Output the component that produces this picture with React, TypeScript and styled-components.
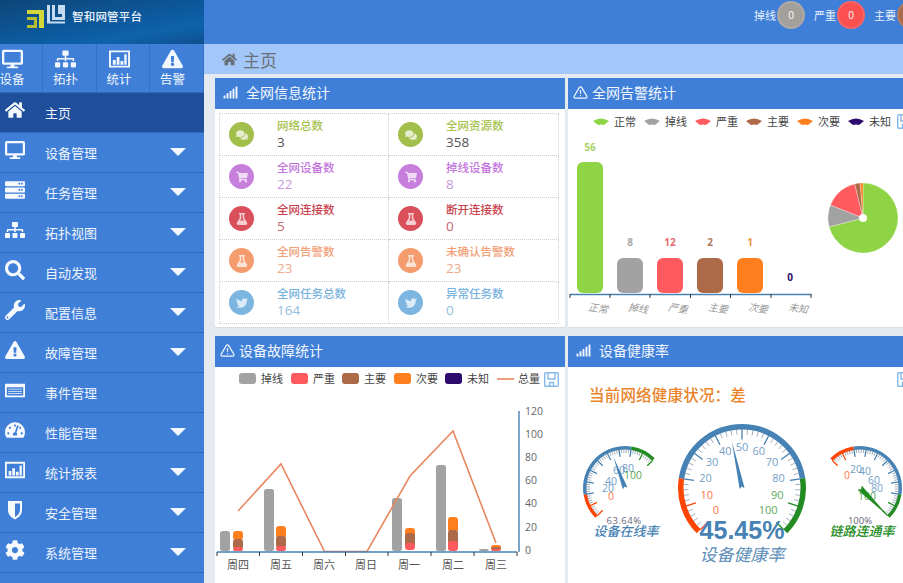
import type { ReactNode } from "react";
import styled, { createGlobalStyle } from "styled-components";
import {
  FaCog,
  FaComments,
  FaDesktop,
  FaExclamationTriangle,
  FaFlask,
  FaHome,
  FaSearch,
  FaServer,
  FaShoppingCart,
  FaSignal,
  FaSitemap,
  FaTachometerAlt,
  FaTwitter,
  FaWrench,
} from "react-icons/fa";
import { FiAlertTriangle } from "react-icons/fi";

const FONT = `"Open Sans", "Noto Sans CJK SC", sans-serif`;
const BLUE = "#3f7fd8";
const RED = "#ff4500";
const STEEL = "#4682b4";
const GREEN = "#228b22";

const GlobalStyle = createGlobalStyle`
  html, body {
    margin: 0;
    padding: 0;
    overflow: hidden;
    background: #e5e9f0;
    font-family: ${FONT};
  }
  * { box-sizing: border-box; }
`;

const Page = styled.div`
  width: 903px;
  height: 583px;
  overflow: hidden;
  display: flex;
  flex-direction: column;
`;

const TopBar = styled.div`
  height: 44px;
  flex: none;
  display: flex;
  background: ${BLUE};
`;

const Brand = styled.div`
  width: 204px;
  flex: none;
  display: flex;
  align-items: flex-start;
  gap: 7px;
  padding: 5px 0 0 27px;
  background: linear-gradient(170deg, #0e4678 0%, #0c5a9f 55%, #0f62aa 75%, #0e4f8e 100%);
`;

const BrandName = styled.span`
  margin-top: 3px;
  color: #eaf3fb;
  font-size: 11.5px;
  font-weight: 500;
  letter-spacing: 0.2px;
`;

const AlarmStrip = styled.div`
  display: flex;
  align-items: flex-start;
  gap: 9px;
  padding: 1px 0 0 550px;
  white-space: nowrap;
`;

const AlarmItem = styled.div`
  display: flex;
  align-items: center;
  gap: 1px;
  color: #e8f1fc;
  font-size: 11px;
`;

const AlarmBadge = styled.span<{ $color: string }>`
  width: 28px;
  height: 28px;
  flex: none;
  display: flex;
  align-items: center;
  justify-content: center;
  border-radius: 50%;
  color: #fff;
  font-size: 10px;
  background: ${(p) => p.$color};
  border: 2px solid rgba(255, 255, 255, 0.12);
`;

const Main = styled.div`
  flex: 1;
  min-height: 0;
  display: flex;
`;

const Sidebar = styled.nav`
  width: 204px;
  flex: none;
  overflow: hidden;
  background: ${BLUE};
`;

const ShortcutRow = styled.div`
  height: 49px;
  margin-left: -10px;
  display: grid;
  grid-template-columns: 53px 54px 53px 54px;
  border-bottom: 1px solid #2f68ba;
`;

const Shortcut = styled.div`
  display: flex;
  flex-direction: column;
  align-items: center;
  padding: 5px 8px 0 0;
  color: #f2f7fd;
  font-size: 12.5px;
  line-height: 15px;
  border-right: 1px solid #3570c4;

  svg {
    height: 20px;
    margin-bottom: 3px;
    font-size: 21px;
  }
`;

const MenuRow = styled.div<{ $active?: boolean }>`
  height: 40px;
  display: flex;
  align-items: center;
  color: #eef4fc;
  font-size: 13px;
  background: ${(p) => (p.$active ? "#1f4f9b" : "transparent")};
  border-bottom: 1px solid #2f68ba;
`;

const MenuIcon = styled.span`
  width: 45px;
  flex: none;
  display: flex;
  justify-content: center;
  padding: 0 15px 5px 0;
  color: #f6f9fe;
  font-size: 20px;
`;

const MenuLabel = styled.span`
  flex: 1;
`;

const MenuArrow = styled.span`
  width: 0;
  height: 0;
  margin: 0 18px 2px 0;
  border-left: 8px solid transparent;
  border-right: 8px solid transparent;
  border-top: 8px solid #f4f8fe;
`;

const Content = styled.div`
  flex: 1;
  min-width: 0;
  display: flex;
  flex-direction: column;
`;

const Breadcrumb = styled.div`
  height: 30px;
  flex: none;
  display: flex;
  align-items: center;
  gap: 6px;
  padding-left: 18px;
  color: #6a7078;
  font-size: 17px;
  background: #a3c7f8;

  svg {
    font-size: 15px;
  }
`;

const PanelGrid = styled.div`
  display: grid;
  grid-template-columns: 350px 346px;
  grid-template-rows: 249px 249px;
  gap: 9px 3px;
  padding: 4px 0 0 11px;
`;

const Panel = styled.section`
  overflow: hidden;
  background: #fff;
  box-shadow: 0 1px 0 #d9dde3;
`;

const PanelHead = styled.header<{ $wide?: boolean }>`
  height: 31px;
  display: flex;
  align-items: center;
  gap: ${(p) => (p.$wide ? "8px" : "4px")};
  padding: 0 0 3px ${(p) => (p.$wide ? "8px" : "5px")};
  color: #f2f7fd;
  font-size: 14px;
  background: ${BLUE};

  svg {
    font-size: 15px;
    flex: none;
  }
`;

const StatGrid = styled.div`
  margin: 4px 6px 0 4px;
  display: grid;
  grid-template-columns: 169px 170px;
  grid-auto-rows: 42px;
  border-top: 1px dotted #cfcfcf;
  border-left: 1px dotted #cfcfcf;
`;

const StatCell = styled.div`
  display: flex;
  align-items: center;
  gap: 23px;
  padding-left: 9px;
  border-right: 1px dotted #cfcfcf;
  border-bottom: 1px dotted #cfcfcf;
`;

const StatBadge = styled.span<{ $color: string }>`
  width: 25px;
  height: 25px;
  flex: none;
  display: flex;
  align-items: center;
  justify-content: center;
  border-radius: 50%;
  color: rgba(255, 255, 255, 0.72);
  font-size: 12px;
  background: ${(p) => p.$color};
`;

const StatText = styled.div`
  display: flex;
  flex-direction: column;
  margin-top: -1px;
`;

const StatTitle = styled.span<{ $color: string }>`
  color: ${(p) => p.$color};
  font-size: 11.5px;
  font-weight: 500;
  line-height: 17px;
`;

const StatValue = styled.span<{ $color: string }>`
  color: ${(p) => p.$color};
  font-size: 13.5px;
  line-height: 17px;
`;

const Chart = styled.svg`
  display: block;
  font-family: ${FONT};
`;

const HealthBody = styled.div`
  position: relative;
`;

const HealthSave = styled.svg`
  position: absolute;
  top: 5px;
  left: 329px;
`;

const HealthTitle = styled.div`
  padding: 16px 0 0 21px;
  height: 49px;
  color: #e8842a;
  font-size: 15.5px;
  font-weight: 500;
  letter-spacing: 0.2px;
`;

// bar-chart icon in a frame, the icon package only has the open version
const FramedChart = () => (
  <svg width="1em" height="1em" viewBox="0 0 22 20" fill="currentColor">
    <path fillRule="evenodd" d="M0 1h22v18H0zM2 3v14h18V3z" />
    <path d="M4 11h3v5H4zM8 8h3v8H8zM12 12h3v4h-3zM16 5h2.500v11H16z" />
  </svg>
);

const EventList = () => (
  <svg width="1em" height="1em" viewBox="0 0 22 20" fill="currentColor">
    <path fillRule="evenodd" d="M0 3h22v15H0zM2 7v9h18V7z" />
    <path d="M3.500 8.500h15v1h-15zM3.500 11h15v1h-15zM3.500 13.500h15v1h-15z" />
  </svg>
);

const Shield = () => (
  <svg width="1em" height="1em" viewBox="0 0 20 20" fill="currentColor">
    <path fillRule="evenodd" d="M3 1h14v9c0 5-4 8-7 9.500C7 18 3 15 3 10zM10 3.500V17c2.500-1.400 5-3.800 5-7V3.500z" />
  </svg>
);

type Stat = { title: string; value: string; titleColor: string; valueColor: string; badge: string; icon: ReactNode };

const stats: Stat[] = [
  { title: "网络总数", value: "3", titleColor: "#a8c34f", valueColor: "#555", badge: "#a3bf4b", icon: <FaComments /> },
  { title: "全网资源数", value: "358", titleColor: "#a8c34f", valueColor: "#555", badge: "#a3bf4b", icon: <FaComments /> },
  { title: "全网设备数", value: "22", titleColor: "#c276dc", valueColor: "#c79ade", badge: "#c77fdc", icon: <FaShoppingCart /> },
  { title: "掉线设备数", value: "8", titleColor: "#c276dc", valueColor: "#c79ade", badge: "#c77fdc", icon: <FaShoppingCart /> },
  { title: "全网连接数", value: "5", titleColor: "#c9444e", valueColor: "#c1666e", badge: "#d9505a", icon: <FaFlask /> },
  { title: "断开连接数", value: "0", titleColor: "#c9444e", valueColor: "#c1666e", badge: "#d9505a", icon: <FaFlask /> },
  { title: "全网告警数", value: "23", titleColor: "#f2a078", valueColor: "#eda98a", badge: "#f59c6e", icon: <FaFlask /> },
  { title: "未确认告警数", value: "23", titleColor: "#f2a078", valueColor: "#eda98a", badge: "#f59c6e", icon: <FaFlask /> },
  { title: "全网任务总数", value: "164", titleColor: "#78b2de", valueColor: "#94bddd", badge: "#7cb5e0", icon: <FaTwitter /> },
  { title: "异常任务数", value: "0", titleColor: "#78b2de", valueColor: "#94bddd", badge: "#7cb5e0", icon: <FaTwitter /> },
];

const menu: { label: string; icon: ReactNode; arrow?: boolean; active?: boolean }[] = [
  { label: "主页", icon: <FaHome />, active: true },
  { label: "设备管理", icon: <FaDesktop />, arrow: true },
  { label: "任务管理", icon: <FaServer />, arrow: true },
  { label: "拓扑视图", icon: <FaSitemap />, arrow: true },
  { label: "自动发现", icon: <FaSearch />, arrow: true },
  { label: "配置信息", icon: <FaWrench />, arrow: true },
  { label: "故障管理", icon: <FaExclamationTriangle />, arrow: true },
  { label: "事件管理", icon: <EventList /> },
  { label: "性能管理", icon: <FaTachometerAlt />, arrow: true },
  { label: "统计报表", icon: <FramedChart />, arrow: true },
  { label: "安全管理", icon: <Shield />, arrow: true },
  { label: "系统管理", icon: <FaCog />, arrow: true },
];

const Logo = () => (
  <svg width="38" height="24" viewBox="0 0 38 24">
    <path d="M0 5h17v18h-5V9H0z" fill="#d3d83a" />
    <path d="M0 12h10v11H0v-3h7v-5H0z" fill="#b6bf2f" />
    <path d="M20 0h3v18h-3z" fill="#c5dcf2" />
    <path d="M25 0h3v12h7V9h-4V0h7v15H25z" fill="#c5dcf2" />
    <path d="M20 18.500h18v-2H20z" fill="#c5dcf2" />
  </svg>
);

const SaveIcon = ({ x, y }: { x: number; y: number }) => (
  <g transform={`translate(${x} ${y})`} fill="none" stroke="#86b8ea" strokeWidth="1.4">
    <rect x="0.7" y="0.7" width="13.6" height="13.6" rx="1" />
    <path d="M4 1v6h7V1M5.500 14v-3.500h4V14" />
  </g>
);

// fan shaped legend mark of the alarm chart
const FanMark = ({ x, y, color }: { x: number; y: number; color: string }) => (
  <path transform={`translate(${x} ${y})`} d="M0 3Q8-2 16 3L11 7Q8 6 5 7Z" fill={color} />
);

const alarmBars = [
  { name: "正常", value: 56, color: "#8fd444", labelColor: "#a8d46a", x: 577, top: 162, labelY: 151 },
  { name: "掉线", value: 8, color: "#a2a2a2", labelColor: "#a8a8a8", x: 617, top: 258, labelY: 246 },
  { name: "严重", value: 12, color: "#ff5b5f", labelColor: "#e86a70", x: 657, top: 258, labelY: 246 },
  { name: "主要", value: 2, color: "#ac6a48", labelColor: "#ac7a60", x: 697, top: 258, labelY: 246 },
  { name: "次要", value: 1, color: "#ff7f1e", labelColor: "#f09040", x: 737, top: 258, labelY: 246 },
  { name: "未知", value: 0, color: "#2d0a6e", labelColor: "#2d0a6e", x: 777, top: 293, labelY: 281 },
];

const polar = (cx: number, cy: number, r: number, deg: number) => {
  const a = (deg * Math.PI) / 180;
  return [cx + r * Math.cos(a), cy - r * Math.sin(a)];
};

const sectorPath = (cx: number, cy: number, r: number, from: number, to: number) => {
  // angles are clockwise from the top
  const [x1, y1] = polar(cx, cy, r, 90 - from);
  const [x2, y2] = polar(cx, cy, r, 90 - to);
  return `M${cx} ${cy}L${x1} ${y1}A${r} ${r} 0 ${to - from > 180 ? 1 : 0} 1 ${x2} ${y2}Z`;
};

const AlarmPie = () => {
  const data = alarmBars.filter((b) => b.value > 0);
  const total = data.reduce((s, b) => s + b.value, 0);
  let angle = 0;
  return (
    <g>
      {data.map((b) => {
        const from = angle;
        angle += (b.value / total) * 360;
        return <path key={b.name} d={sectorPath(863, 218, 35, from, angle)} fill={b.color} stroke="#fff" strokeWidth="0.3" />;
      })}
      <circle cx="863" cy="218" r="4" fill="#fff" />
    </g>
  );
};

const AlarmChart = () => {
  const ticks = [570, 610, 650, 690.5, 730.5, 771, 811];
  return (
    <Chart width="345" height="217" viewBox="568 109 345 217">
      {alarmBars.map((b) => (
        <g key={b.name}>
          <FanMark x={b.x + 16 + (b.x - 577) * 0.275} y={118} color={b.color} />
          <text x={b.x + 37 + (b.x - 577) * 0.275} y={126} fontSize="11" fill="#444">
            {b.name}
          </text>
          {b.value > 0 && <rect x={b.x} y={b.top} width="26" height={293 - b.top} rx="6" fill={b.color} />}
          <text x={b.x + 13} y={b.labelY} fontSize="10" fontWeight="700" textAnchor="middle" fill={b.labelColor}>
            {b.value}
          </text>
          <text
            x={b.x + 21}
            y={312}
            fontSize="10"
            fontStyle="italic"
            fontFamily="'Liberation Serif', 'Noto Sans CJK SC', serif"
            textAnchor="middle"
            fill="#9a9a9a"
            transform={`rotate(8 ${b.x + 21} 309)`}
          >
            {b.name}
          </text>
        </g>
      ))}
      <SaveIcon x={897} y={114} />
      <path d="M570 294.500H811.500" stroke={STEEL} strokeWidth="1.4" />
      {ticks.map((x) => (
        <path key={x} d={`M${x} 294v4`} stroke="#333" strokeWidth="1" />
      ))}
      <AlarmPie />
    </Chart>
  );
};

const faultLegend = [
  { name: "掉线", color: "#a2a2a2", x: 239 },
  { name: "严重", color: "#ff5b5f", x: 291 },
  { name: "主要", color: "#ac6a48", x: 342 },
  { name: "次要", color: "#ff7f1e", x: 394 },
  { name: "未知", color: "#2d0a6e", x: 445 },
];

const faultDays = [
  { day: "周四", x: 238, grey: [220, 531], stack: [[233, 531, 540], [233, 539, 549], [233, 547, 551]] },
  { day: "周五", x: 281, grey: [264, 489], stack: [[276, 526, 538], [276, 536, 548], [276, 546, 551]] },
  { day: "周六", x: 324, grey: null, stack: [] },
  { day: "周日", x: 366, grey: null, stack: [] },
  { day: "周一", x: 409, grey: [392, 498], stack: [[405, 528, 540], [405, 533, 548], [405, 543, 550]] },
  { day: "周二", x: 453, grey: [436, 465], stack: [[448, 517, 532], [448, 530, 545], [448, 541, 551]] },
  { day: "周三", x: 496, grey: [479, 549], stack: [[491, 545, 549], [491, 547, 550], [491, 549, 551]] },
];

const stackColors = ["#ff7f1e", "#ac6a48", "#ff5b5f"];

const FaultChart = () => {
  const xTicks = [217, 259.5, 302.5, 345.5, 388, 431, 474, 517];
  const yLabels = [
    ["120", 411],
    ["100", 434],
    ["80", 457],
    ["60", 480],
    ["40", 503],
    ["20", 527],
    ["0", 550],
  ] as const;
  return (
    <Chart width="349" height="216" viewBox="215 367 349 216">
      {faultLegend.map((l) => (
        <g key={l.name}>
          <rect x={l.x} y={373} width="17" height="11" rx="3" fill={l.color} />
          <text x={l.x + 22} y={383} fontSize="11" fill="#444">
            {l.name}
          </text>
        </g>
      ))}
      <path d="M497 379H514" stroke="#e8875f" strokeWidth="1.6" />
      <text x={518} y={383} fontSize="11" fill="#444">
        总量
      </text>
      <SaveIcon x={544} y={372} />
      {faultDays.map((d) => (
        <g key={d.day}>
          {d.grey && <rect x={d.grey[0]} y={d.grey[1]} width="10" height={551 - d.grey[1]} rx="2.5" fill="#a2a2a2" />}
          {d.stack.map((s, i) => (
            <rect key={i} x={s[0]} y={s[1]} width="10" height={s[2] - s[1]} rx="3" fill={stackColors[i]} />
          ))}
          <text x={d.x} y={569} fontSize="11" textAnchor="middle" fill="#555">
            {d.day}
          </text>
        </g>
      ))}
      <polyline
        points="238,511 281,464 324.5,551.5 367,551.5 410,476 453,431 496,543"
        fill="none"
        stroke="#e8875f"
        strokeWidth="1.6"
      />
      <path d="M217 552H517M519 411V552" stroke={STEEL} strokeWidth="1.4" fill="none" />
      {xTicks.map((x) => (
        <path key={x} d={`M${x} 552v4`} stroke="#333" strokeWidth="1" />
      ))}
      {yLabels.map(([t, y]) => (
        <text key={t} x={525} y={y + 4} fontSize="10.5" fill="#666">
          {t}
        </text>
      ))}
    </Chart>
  );
};

type GaugeProps = {
  cx: number;
  cy: number;
  r: number;
  ring: number;
  start: number;
  sweep: number;
  value: number;
  pointer: number;
  pointerColor: string;
  pointerWidth: number;
  major: number;
  fontSize: number;
  // explicit label places, the small gauges squeeze them into the middle
  labels: { text: string; x: number; y: number }[];
};

const bandColor = (f: number) => (f < 0.2 ? RED : f <= 0.8 ? STEEL : GREEN);

const Gauge = ({ cx, cy, r, ring, start, sweep, value, pointer, pointerColor, pointerWidth, major, fontSize, labels }: GaugeProps) => {
  const angleAt = (f: number) => start - sweep * f;
  const arc = (from: number, to: number) => {
    const [x1, y1] = polar(cx, cy, r - ring / 2, angleAt(from));
    const [x2, y2] = polar(cx, cy, r - ring / 2, angleAt(to));
    const large = sweep * (to - from) > 180 ? 1 : 0;
    return `M${x1} ${y1}A${r - ring / 2} ${r - ring / 2} 0 ${large} 1 ${x2} ${y2}`;
  };
  const ticks = Array.from({ length: 51 }, (_, i) => i / 50);
  const needle = angleAt(value / 100);
  const [tx, ty] = polar(cx, cy, pointer, needle);
  const [b1x, b1y] = polar(cx, cy, pointerWidth / 2, needle + 90);
  const [b2x, b2y] = polar(cx, cy, pointerWidth / 2, needle - 90);
  return (
    <g>
      <path d={arc(0, 0.2)} stroke={RED} strokeWidth={ring} fill="none" />
      <path d={arc(0.2, 0.8)} stroke={STEEL} strokeWidth={ring} fill="none" />
      <path d={arc(0.8, 1)} stroke={GREEN} strokeWidth={ring} fill="none" />
      {ticks.map((f, i) => {
        const isMajor = i % 5 === 0;
        const [x1, y1] = polar(cx, cy, r - ring + 0.5, angleAt(f));
        const [x2, y2] = polar(cx, cy, r - ring - (isMajor ? major : major / 2), angleAt(f));
        return (
          <line
            key={i}
            x1={x1}
            y1={y1}
            x2={x2}
            y2={y2}
            stroke={isMajor ? bandColor(f) : "#7d8ea0"}
            strokeWidth={isMajor ? 1.3 : 0.7}
          />
        );
      })}
      {labels.map((l) => {
        const n = Number(l.text) / 100;
        return (
          <text key={l.text} x={l.x} y={l.y} fontSize={fontSize} textAnchor="middle" dominantBaseline="middle" fill={bandColor(n)} opacity="0.75">
            {l.text}
          </text>
        );
      })}
      <polygon points={`${tx},${ty} ${b1x},${b1y} ${b2x},${b2y}`} fill={pointerColor} />
      <circle cx={cx} cy={cy} r={pointerWidth / 4} fill="#fff" />
    </g>
  );
};

const bigLabels = Array.from({ length: 11 }, (_, i) => {
  const [x, y] = polar(742, 485, 37, 225 - 27 * i);
  return { text: String(i * 10), x, y };
});

const HealthChart = () => (
  <Chart width="345" height="168" viewBox="568 416 345 168">
    <Gauge
      cx={625}
      cy={488}
      r={42}
      ring={3.5}
      start={225}
      sweep={180}
      value={63.64}
      pointer={33}
      pointerColor={STEEL}
      pointerWidth={5}
      major={7}
      fontSize={10.5}
      labels={[
        { text: "0", x: 611, y: 497 },
        { text: "20", x: 608, y: 489 },
        { text: "40", x: 611, y: 482 },
        { text: "60", x: 619, y: 471 },
        { text: "80", x: 628, y: 469 },
        { text: "100", x: 633, y: 476 },
      ]}
    />
    <text x={624} y={524} fontSize="9.5" textAnchor="middle" fill="#667" letterSpacing="0.5">
      63.64%
    </text>
    <text x={626} y={536} fontSize="13" fontStyle="italic" fontWeight="500" textAnchor="middle" fill={STEEL}>
      设备在线率
    </text>

    <Gauge
      cx={742}
      cy={488}
      r={64}
      ring={5.5}
      start={225}
      sweep={270}
      value={45.45}
      pointer={48}
      pointerColor={STEEL}
      pointerWidth={5}
      major={10}
      fontSize={11}
      labels={bigLabels}
    />
    <text x={742} y={539} fontSize="25" fontWeight="700" textAnchor="middle" fill={STEEL} fontFamily="Liberation Sans, sans-serif">
      45.45%
    </text>
    <text x={742} y={561} fontSize="17" fontStyle="italic" textAnchor="middle" fill="#5b8db8">
      设备健康率
    </text>

    <Gauge
      cx={860}
      cy={488}
      r={42}
      ring={3.5}
      start={135}
      sweep={180}
      value={100}
      pointer={40}
      pointerColor={GREEN}
      pointerWidth={6}
      major={7}
      fontSize={10.5}
      labels={[
        { text: "0", x: 847, y: 476 },
        { text: "20", x: 856, y: 470 },
        { text: "40", x: 865, y: 472 },
        { text: "60", x: 874, y: 481 },
        { text: "80", x: 877, y: 489 },
        { text: "100", x: 867, y: 497 },
      ]}
    />
    <text x={860} y={524} fontSize="9.5" textAnchor="middle" fill="#667">
      100%
    </text>
    <text x={862} y={536} fontSize="13" fontStyle="italic" fontWeight="500" textAnchor="middle" fill={GREEN}>
      链路连通率
    </text>
  </Chart>
);

function App() {
  return (
    <Page>
      <GlobalStyle />
      <TopBar>
        <Brand>
          <Logo />
          <BrandName>智和网管平台</BrandName>
        </Brand>
        <AlarmStrip>
          <AlarmItem>
            掉线<AlarmBadge $color="#a39f9b">0</AlarmBadge>
          </AlarmItem>
          <AlarmItem>
            严重<AlarmBadge $color="#fb4f50">0</AlarmBadge>
          </AlarmItem>
          <AlarmItem>
            主要<AlarmBadge $color="#ac6a48">0</AlarmBadge>
          </AlarmItem>
        </AlarmStrip>
      </TopBar>
      <Main>
        <Sidebar>
          <ShortcutRow>
            <Shortcut>
              <FaDesktop />
              设备
            </Shortcut>
            <Shortcut>
              <FaSitemap />
              拓扑
            </Shortcut>
            <Shortcut>
              <FramedChart />
              统计
            </Shortcut>
            <Shortcut>
              <FaExclamationTriangle />
              告警
            </Shortcut>
          </ShortcutRow>
          {menu.map((m) => (
            <MenuRow key={m.label} $active={m.active}>
              <MenuIcon>{m.icon}</MenuIcon>
              <MenuLabel>{m.label}</MenuLabel>
              {m.arrow && <MenuArrow />}
            </MenuRow>
          ))}
        </Sidebar>
        <Content>
          <Breadcrumb>
            <FaHome />
            主页
          </Breadcrumb>
          <PanelGrid>
            <Panel>
              <PanelHead $wide>
                <FaSignal />
                全网信息统计
              </PanelHead>
              <StatGrid>
                {stats.map((s) => (
                  <StatCell key={s.title}>
                    <StatBadge $color={s.badge}>{s.icon}</StatBadge>
                    <StatText>
                      <StatTitle $color={s.titleColor}>{s.title}</StatTitle>
                      <StatValue $color={s.valueColor}>{s.value}</StatValue>
                    </StatText>
                  </StatCell>
                ))}
              </StatGrid>
            </Panel>
            <Panel>
              <PanelHead>
                <FiAlertTriangle />
                全网告警统计
              </PanelHead>
              <AlarmChart />
            </Panel>
            <Panel>
              <PanelHead>
                <FiAlertTriangle />
                设备故障统计
              </PanelHead>
              <FaultChart />
            </Panel>
            <Panel>
              <PanelHead $wide>
                <FaSignal />
                设备健康率
              </PanelHead>
              <HealthBody>
                <HealthSave width="15" height="15" viewBox="0 0 15 15">
                  <SaveIcon x={0} y={0} />
                </HealthSave>
                <HealthTitle>当前网络健康状况：差</HealthTitle>
                <HealthChart />
              </HealthBody>
            </Panel>
          </PanelGrid>
        </Content>
      </Main>
    </Page>
  );
}

export default App;
